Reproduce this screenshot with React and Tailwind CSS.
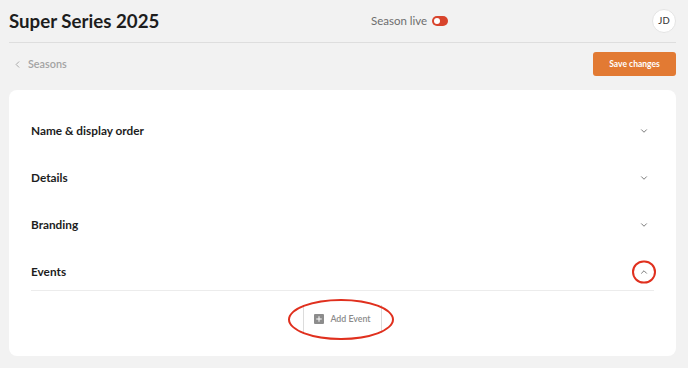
import React from 'react';
import { ChevronDown, ChevronUp, ChevronLeft, Plus } from 'lucide-react';

const sections = ['Name & display order', 'Details', 'Branding'];

function Row({ title, open = false }) {
  return (
    <div className={`flex items-center justify-between ${open ? 'h-[43px] pt-[5px] border-b border-[#ececec]' : 'h-[47px]'}`}>
      <span className="text-[11.8px] font-bold text-[#1d1d1d]">{title}</span>
      <span className="relative mr-[2px] flex h-4 w-4 items-center justify-center text-[#6f6f6f]">
        {open ? <ChevronUp className="h-[10px] w-[10px]" strokeWidth={2.2} /> : <ChevronDown className="h-[10px] w-[10px]" strokeWidth={2.2} />}
        {open && (
          <span className="pointer-events-none absolute left-1/2 top-1/2 h-[23px] w-[24px] -translate-x-1/2 -translate-y-1/2 rounded-full border-2 border-[#e0301e]" />
        )}
      </span>
    </div>
  );
}

export default function App() {
  return (
    <div className="min-h-[368px] w-full bg-[#f2f2f2] pl-[9px] pr-[12px] font-['Lato',sans-serif] text-[#1d1d1d]">
      <header className="flex h-[43px] items-center border-b border-[#dedede]">
        <h1 className="w-[362px] shrink-0 text-[18.7px] font-bold">Super Series 2025</h1>
        <div className="flex items-center gap-[5px]">
          <span className="text-[11.5px] text-[#6e6e6e]">Season live</span>
          <span className="flex h-[10px] w-[16px] items-center rounded-full bg-[#d8442c] pl-[2px]">
            <span className="h-[6px] w-[6px] rounded-full bg-white" />
          </span>
        </div>
        <div className="ml-auto flex h-[24px] w-[24px] items-center justify-center rounded-full border border-[#e4e4e4] bg-white text-[9.5px] font-medium text-[#3a3a3a]">
          JD
        </div>
      </header>

      <div className="flex items-center justify-between pt-[9px] pb-[14px]">
        <div className="flex items-center gap-[5px] pl-[3px] text-[#a3a3a3]">
          <ChevronLeft className="h-[11px] w-[11px]" strokeWidth={2} />
          <span className="text-[10.8px] font-semibold">Seasons</span>
        </div>
        <button className="h-[24px] w-[83px] rounded-[3px] bg-[#e27a33] text-[8.5px] font-bold text-white">
          Save changes
        </button>
      </div>

      <div className="rounded-lg bg-white px-[22px] pt-[17px] pb-[23px]">
        {sections.map((s) => (
          <Row key={s} title={s} />
        ))}
        <Row title="Events" open />
        <div className="flex justify-center pt-[14px]">
          <div className="relative">
            <button className="flex h-[28px] items-center gap-[6px] border-x border-[#dcdcdc] px-[10px] text-[8.8px] font-semibold text-[#8a8a8a]">
              <span className="flex h-[10px] w-[10px] items-center justify-center rounded-[1px] bg-[#8c8c8c]">
                <Plus className="h-[8px] w-[8px] text-white" strokeWidth={3} />
              </span>
              Add Event
            </button>
            <span className="pointer-events-none absolute left-[-15px] right-[-12px] top-[-6px] bottom-[-7px] rounded-[50%] border-2 border-[#e0301e]" />
          </div>
        </div>
      </div>
    </div>
  );
}
